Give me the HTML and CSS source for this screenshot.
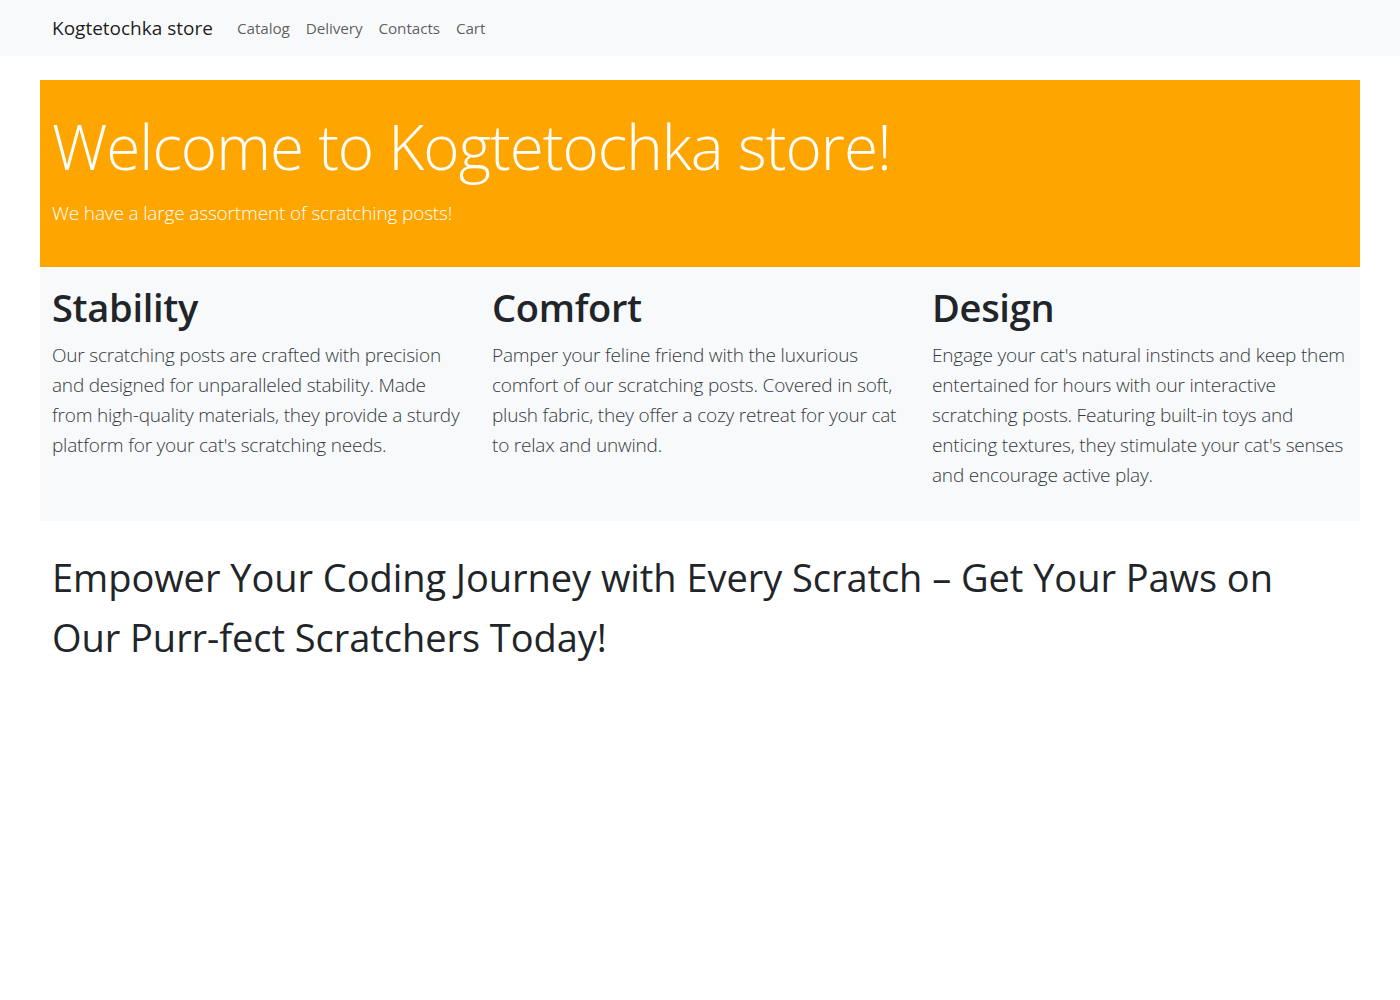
FILE: index.html
```html
<!DOCTYPE html>
<html lang="en">
<head>
<meta charset="utf-8">
<title>Kogtetochka store</title>
<link rel="stylesheet" href="styles.css">
</head>
<body>
<nav class="navbar">
  <div class="container nav-inner">
    <a class="brand" href="#">Kogtetochka store</a>
    <ul class="nav-links">
      <li><a href="#">Catalog</a></li>
      <li><a href="#">Delivery</a></li>
      <li><a href="#">Contacts</a></li>
      <li><a href="#">Cart</a></li>
    </ul>
  </div>
</nav>
<main class="container main">
  <section class="hero">
    <h1 class="hero-title">Welcome to Kogtetochka store!</h1>
    <p class="hero-lead">We have a large assortment of scratching posts!</p>
  </section>
  <section class="features">
    <div class="feature">
      <h2 class="feature-title">Stability</h2>
      <p class="feature-text">Our scratching posts are crafted with precision and designed for unparalleled stability. Made from high-quality materials, they provide a sturdy platform for your cat's scratching needs.</p>
    </div>
    <div class="feature">
      <h2 class="feature-title">Comfort</h2>
      <p class="feature-text">Pamper your feline friend with the luxurious comfort of our scratching posts. Covered in soft, plush fabric, they offer a cozy retreat for your cat to relax and unwind.</p>
    </div>
    <div class="feature">
      <h2 class="feature-title">Design</h2>
      <p class="feature-text">Engage your cat's natural instincts and keep them entertained for hours with our interactive scratching posts. Featuring built-in toys and enticing textures, they stimulate your cat's senses and encourage active play.</p>
    </div>
  </section>
  <p class="slogan">Empower Your Coding Journey with Every Scratch – Get Your Paws on Our Purr-fect Scratchers Today!</p>
</main>
</body>
</html>
```
FILE: styles.css
```css
* { box-sizing: border-box; }
html, body { margin: 0; padding: 0; }
body {
  font-family: "Open Sans", "Noto Sans", sans-serif;
  color: #212529;
  background: #fff;
  font-size: 16px;
  line-height: 1.5;
}
.container {
  max-width: 1320px;
  margin: 0 auto;
  padding: 0 12px;
}
.navbar {
  background: #f8f9fa;
  height: 56px;
}
.nav-inner {
  display: flex;
  align-items: center;
  height: 56px;
  padding-top: 1px;
}
.brand {
  font-size: 19px;
  color: rgba(0,0,0,0.9);
  text-decoration: none;
  margin-right: 16px;
}
.nav-links {
  display: flex;
  list-style: none;
  margin: 0;
  padding: 0;
}
.nav-links a {
  display: block;
  padding: 8px;
  font-size: 15.3px;
  color: rgba(0,0,0,0.65);
  text-decoration: none;
  letter-spacing: -0.1px;
}
.main {
  margin-top: 24px;
  padding: 0;
}
.hero {
  background: #ffa500;
  color: #fff;
  padding: 28px 12px 23px;
}
.hero-title {
  margin: 0 0 13px;
  font-size: 62px;
  font-weight: 300;
  line-height: 1.24;
  letter-spacing: -1px;
}
.hero-lead {
  margin: 0 0 16px;
  font-size: 19px;
  font-weight: 300;
  line-height: 30px;
  letter-spacing: -0.15px;
}
.features {
  background: #f8f9fa;
  display: grid;
  grid-template-columns: repeat(3, 1fr);
  padding: 16px 0;
}
.feature {
  padding: 0 12px;
}
.feature-title {
  margin: 0 0 9px;
  font-size: 38px;
  font-weight: 600;
  line-height: 48px;
  letter-spacing: -0.3px;
}
.feature-text {
  margin: 0 0 15px;
  font-size: 19px;
  font-weight: 300;
  line-height: 30px;
  color: #343a40;
  letter-spacing: -0.2px;
}
.slogan {
  margin: 26px 0 0;
  padding: 0 12px;
  font-size: 38px;
  font-weight: 400;
  line-height: 60px;
  letter-spacing: -0.05px;
}
```
